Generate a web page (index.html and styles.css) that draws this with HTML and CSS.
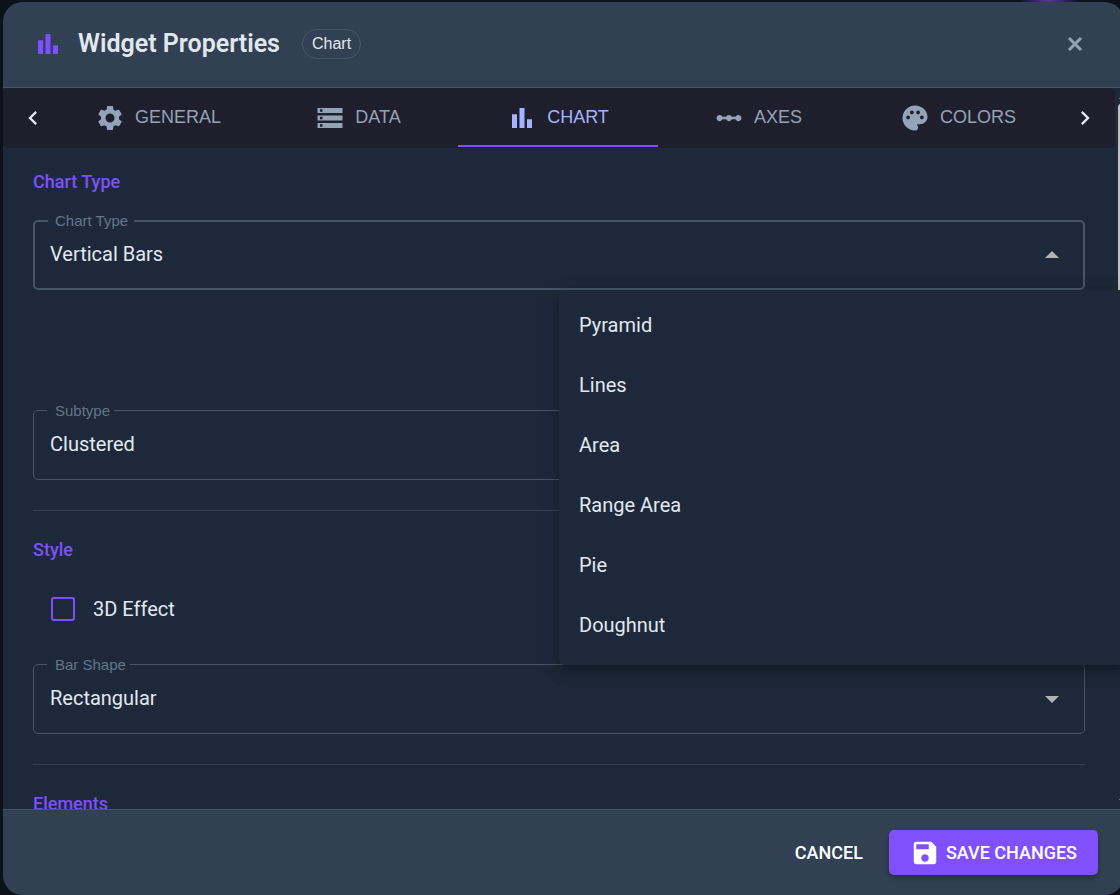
FILE: index.html
```html
<!DOCTYPE html>
<html lang="en">
<head>
<meta charset="utf-8">
<title>Widget Properties</title>
<link rel="stylesheet" href="styles.css">
</head>
<body>
<div class="backdrop">
<main class="dialog" role="dialog" aria-labelledby="dialog-title">
  <header class="dialog-header">
    <svg class="icon header-icon" viewBox="0 0 24 24"><path d="M4 9h4v11H4zm12 4h4v7h-4zm-6-9h4v16h-4z"/></svg>
    <h1 class="title" id="dialog-title">Widget Properties</h1>
    <span class="chip">Chart</span>
    <button class="close" type="button" aria-label="Close">
      <svg viewBox="0 0 20 20"><path d="M4 4l12 12M16 4L4 16"/></svg>
    </button>
  </header>

  <div class="dialog-body">
    <nav class="tab-strip">
      <button class="tab-scroll prev" type="button" aria-label="Previous tabs">
        <svg viewBox="0 0 24 24"><path d="M15.41 7.41L14 6l-6 6 6 6 1.41-1.41L10.83 12z"/></svg>
      </button>
      <div class="tabs" role="tablist">
        <button class="tab" type="button" role="tab">
          <svg class="icon" viewBox="0 0 24 24"><path d="M19.14 12.94c.04-.3.06-.61.06-.94 0-.32-.02-.64-.07-.94l2.03-1.58c.18-.14.23-.41.12-.61l-1.92-3.32c-.12-.22-.37-.29-.59-.22l-2.39.96c-.5-.38-1.03-.7-1.62-.94l-.36-2.54c-.04-.24-.24-.41-.48-.41h-3.84c-.24 0-.43.17-.47.41l-.36 2.54c-.59.24-1.13.57-1.62.94l-2.39-.96c-.22-.08-.47 0-.59.22L2.74 8.87c-.12.21-.08.47.12.61l2.03 1.58c-.05.3-.09.63-.09.94s.02.64.07.94l-2.03 1.58c-.18.14-.23.41-.12.61l1.92 3.32c.12.22.37.29.59.22l2.39-.96c.5.38 1.03.7 1.62.94l.36 2.54c.05.24.24.41.48.41h3.84c.24 0 .44-.17.47-.41l.36-2.54c.59-.24 1.13-.56 1.62-.94l2.39.96c.22.08.47 0 .59-.22l1.92-3.32c.12-.22.07-.47-.12-.61l-2.01-1.58zM12 15.6c-1.98 0-3.6-1.62-3.6-3.6s1.62-3.6 3.6-3.6 3.6 1.62 3.6 3.6-1.62 3.6-3.6 3.6z"/></svg>
          GENERAL
        </button>
        <button class="tab" type="button" role="tab">
          <svg class="icon" viewBox="0 0 24 24"><path d="M2 20h20v-4H2v4zm2-3h2v2H4v-2zM2 4v4h20V4H2zm4 3H4V5h2v2zm-4 7h20v-4H2v4zm2-3h2v2H4v-2z"/></svg>
          DATA
        </button>
        <button class="tab selected" type="button" role="tab" aria-selected="true">
          <svg class="icon" viewBox="0 0 24 24"><path d="M4 9h4v11H4zm12 4h4v7h-4zm-6-9h4v16h-4z"/></svg>
          CHART
        </button>
        <button class="tab" type="button" role="tab">
          <svg class="icon" viewBox="0 0 24 24"><path d="M19.5 9.5c-1.03 0-1.9.62-2.29 1.5h-2.92c-.39-.88-1.26-1.5-2.29-1.5s-1.9.62-2.29 1.5H6.79c-.39-.88-1.26-1.5-2.29-1.5C3.12 9.5 2 10.62 2 12s1.12 2.5 2.5 2.5c1.03 0 1.9-.62 2.29-1.5h2.92c.39.88 1.26 1.5 2.29 1.5s1.9-.62 2.29-1.5h2.92c.39.88 1.26 1.5 2.29 1.5 1.38 0 2.5-1.12 2.5-2.5s-1.12-2.5-2.5-2.5z"/></svg>
          AXES
        </button>
        <button class="tab" type="button" role="tab">
          <svg class="icon" viewBox="0 0 24 24"><path d="M12 2C6.49 2 2 6.49 2 12s4.49 10 10 10c1.38 0 2.5-1.12 2.5-2.5 0-.61-.23-1.2-.64-1.67-.08-.1-.13-.21-.13-.33 0-.28.22-.5.5-.5H16c3.31 0 6-2.69 6-6 0-4.96-4.49-9-10-9zm5.5 11c-.83 0-1.5-.67-1.5-1.5s.67-1.5 1.5-1.5 1.5.67 1.5 1.5-.67 1.5-1.5 1.5zm-3-4c-.83 0-1.5-.67-1.5-1.5S13.670 6 14.500 6s1.500.67 1.500 1.500S15.330 9 14.500 9zM5 11.500c0-.83.67-1.500 1.500-1.500s1.500.67 1.500 1.500S7.330 13 6.500 13 5 12.330 5 11.500zm6-4c0 .83-.67 1.500-1.500 1.500S8 8.330 8 7.500 8.670 6 9.500 6s1.500.67 1.500 1.500z"/></svg>
          COLORS
        </button>
      </div>
      <button class="tab-scroll next" type="button" aria-label="Next tabs">
        <svg viewBox="0 0 24 24"><path d="M8.590 16.590L13.170 12 8.590 7.410 10 6l6 6-6 6z"/></svg>
      </button>
    </nav>

    <div class="panel">
      <section class="group">
        <h2 class="group-title">Chart Type</h2>
        <div class="row">
          <fieldset class="field open">
            <legend class="field-label"><label for="chart-type">Chart Type</label></legend>
            <select class="select" id="chart-type"><option>Vertical Bars</option></select>
          </fieldset>
          <ul class="menu" role="listbox" aria-label="Chart Type">
            <li class="menu-item" role="option">Pyramid</li>
            <li class="menu-item" role="option">Lines</li>
            <li class="menu-item" role="option">Area</li>
            <li class="menu-item" role="option">Range Area</li>
            <li class="menu-item" role="option">Pie</li>
            <li class="menu-item" role="option">Doughnut</li>
          </ul>
        </div>
        <fieldset class="field subtype">
          <legend class="field-label"><label for="subtype">Subtype</label></legend>
          <select class="select" id="subtype"><option>Clustered</option></select>
        </fieldset>
      </section>

      <section class="group">
        <h2 class="group-title">Style</h2>
        <label class="check"><input class="check-box" type="checkbox">3D Effect</label>
        <fieldset class="field">
          <legend class="field-label"><label for="bar-shape">Bar Shape</label></legend>
          <select class="select" id="bar-shape"><option>Rectangular</option></select>
        </fieldset>
      </section>

      <section class="group">
        <h2 class="group-title">Elements</h2>
      </section>
    </div>

    <div class="scrollbar" aria-hidden="true">
      <span class="arrow up"></span>
      <span class="thumb"></span>
      <span class="arrow down"></span>
    </div>
  </div>

  <footer class="dialog-footer">
    <button class="button" type="button">CANCEL</button>
    <button class="button primary" type="button">
      <svg class="icon" viewBox="0 0 24 24"><path d="M17 3H5c-1.110 0-2 .9-2 2v14c0 1.100.89 2 2 2h14c1.100 0 2-.9 2-2V7l-4-4zm-5 16c-1.660 0-3-1.340-3-3s1.340-3 3-3 3 1.340 3 3-1.340 3-3 3zm3-10H5V5h10v4z"/></svg>
      SAVE CHANGES
    </button>
  </footer>
</main>
</div>
</body>
</html>
```

FILE: styles.css
```css
* {
  box-sizing: border-box;
}

body {
  margin: 0;
  background: #0b121b;
  color: #e2e8f0;
  font-family: Roboto, "Liberation Sans", sans-serif;
  font-size: 20px;
}

button,
select {
  font: inherit;
  color: inherit;
  border: 0;
  background: none;
}

.backdrop {
  display: flex;
  height: 100vh;
  overflow: hidden;
  padding: 2px 0 0 3px;
  background: radial-gradient(ellipse 30px 9px at 1049px 0, #5a34ad, transparent) no-repeat;
}

.dialog {
  display: flex;
  flex-direction: column;
  flex: 1;
  min-width: 0;
  margin-right: -4px;
  border-radius: 20px;
  overflow: hidden;
  background: #1d293a;
}

.icon {
  width: 30px;
  height: 30px;
  flex: none;
  fill: currentColor;
}

.dialog-header {
  display: flex;
  align-items: center;
  flex: none;
  height: 86px;
  padding: 0 34px 1px 30px;
  border-bottom: 1px solid #475569;
  background: #314153;
}

.header-icon {
  color: #7f50fc;
}

.title {
  margin: 0 22px 0 15px;
  font-size: 25px;
  line-height: 40px;
  font-weight: 600;
}

.chip {
  height: 30px;
  padding: 0 9px;
  border: 1px solid #475569;
  border-radius: 15px;
  font-family: "Liberation Sans", Arial, sans-serif;
  font-size: 16px;
  line-height: 28px;
}

.close {
  display: flex;
  margin-left: auto;
  padding: 5px;
}

.close svg {
  width: 20px;
  height: 20px;
  fill: none;
  stroke: #94a3b8;
  stroke-width: 3;
}

.dialog-body {
  position: relative;
  flex: 1;
  min-height: 0;
  overflow: hidden;
}

.tab-strip {
  display: flex;
  height: 60px;
  margin-right: 9px;
  border-radius: 5px;
  background: #1f1e2c;
}

.tab-scroll {
  display: flex;
  align-items: center;
  justify-content: center;
  flex: none;
  width: 55px;
  padding: 0;
}

.tab-scroll svg {
  width: 28px;
  height: 28px;
  fill: currentColor;
}

.prev {
  padding-left: 5px;
}

.next {
  width: 57px;
  padding-right: 3px;
}

.tabs {
  display: flex;
  flex: 1;
  padding-bottom: 1px;
}

.tab {
  display: flex;
  align-items: center;
  justify-content: center;
  gap: 10px;
  flex: 1 1 0;
  padding: 0;
  color: #94a3b8;
  font-family: "Liberation Sans", Arial, sans-serif;
  font-size: 18px;
}

.selected {
  color: #a5b4fc;
  box-shadow: inset 0 -2px #7f50fc;
}

.panel {
  padding: 19px 39px 0 30px;
}

.group + .group {
  margin-top: 30px;
  padding-top: 24px;
  border-top: 1px solid #334155;
}

.group-title {
  margin: 0 0 14px;
  color: #7f50fc;
  font-size: 18px;
  line-height: 30px;
  font-weight: 500;
}

.row {
  position: relative;
}

.field {
  min-width: 0;
  margin: 0;
  padding: 0;
  border: 1px solid #475569;
  border-radius: 5px;
}

.field-label {
  margin-left: 13px;
  padding: 0 4px 0 8px;
  color: #64748b;
  font-family: "Liberation Sans", Arial, sans-serif;
  font-size: 15px;
  line-height: 19px;
}

.select {
  display: block;
  width: 100%;
  height: 59px;
  padding: 0 16px 12px;
  appearance: none;
  background: url("data:image/svg+xml,%3Csvg xmlns='http://www.w3.org/2000/svg' viewBox='0 0 14 7'%3E%3Cpath d='M0 0h14L7 7z' fill='%23b3b3b3'/%3E%3C/svg%3E") right 25px top 22px / 14px 7px no-repeat;
}

.open {
  border-width: 2px;
}

.open .field-label {
  padding: 0 6px 0 7px;
  line-height: 20px;
}

.open .select {
  height: 57px;
  padding: 0 15px 11px;
  background-image: url("data:image/svg+xml,%3Csvg xmlns='http://www.w3.org/2000/svg' viewBox='0 0 14 7'%3E%3Cpath d='M0 7h14L7 0z' fill='%23b3b3b3'/%3E%3C/svg%3E");
  background-position: right 24px top 20px;
}

.subtype {
  margin-top: 111px;
}

.menu {
  position: absolute;
  z-index: 2;
  top: 100%;
  left: 50%;
  right: -39px;
  margin: 0;
  padding: 5px 0 10px;
  list-style: none;
  border-radius: 5px;
  background: #1d293a;
  box-shadow: 0 5px 6px -3px rgba(0, 0, 0, 0.2), 0 10px 13px 1px rgba(0, 0, 0, 0.14), 0 4px 18px 3px rgba(0, 0, 0, 0.12);
}

.menu-item {
  padding: 0 20px;
  line-height: 60px;
}

.check {
  display: flex;
  align-items: center;
  gap: 18px;
  height: 60px;
  margin-bottom: 16px;
  padding-left: 18px;
}

.check-box {
  width: 24px;
  height: 24px;
  margin: 0;
  appearance: none;
  border: 2px solid #7f50fc;
  border-radius: 3px;
}

.scrollbar {
  position: absolute;
  top: 0;
  right: -11px;
  bottom: 0;
  display: flex;
  flex-direction: column;
  align-items: center;
  gap: 5px;
  width: 17px;
  padding: 3px 0 2px;
}

.thumb {
  width: 17px;
  height: 400px;
  border-radius: 3px;
  background: #c1c1c1;
}

.arrow {
  border: 8px solid transparent;
}

.up {
  border-top: 0;
  border-bottom-color: #c1c1c1;
}

.down {
  margin-top: auto;
  border-bottom: 0;
  border-top-color: #c1c1c1;
}

.dialog-footer {
  display: flex;
  align-items: center;
  justify-content: flex-end;
  gap: 5px;
  flex: none;
  padding: 20px 26px 20px 20px;
  border-top: 1px solid #475569;
  background: #314153;
}

.button {
  display: flex;
  align-items: center;
  gap: 6px;
  height: 45px;
  padding: 0 21px;
  border-radius: 5px;
  color: #fff;
  font-size: 18px;
  font-weight: 500;
}

.primary {
  background: #7f50fc;
  box-shadow: 0 3px 5px rgba(0, 0, 0, 0.25);
}
```
